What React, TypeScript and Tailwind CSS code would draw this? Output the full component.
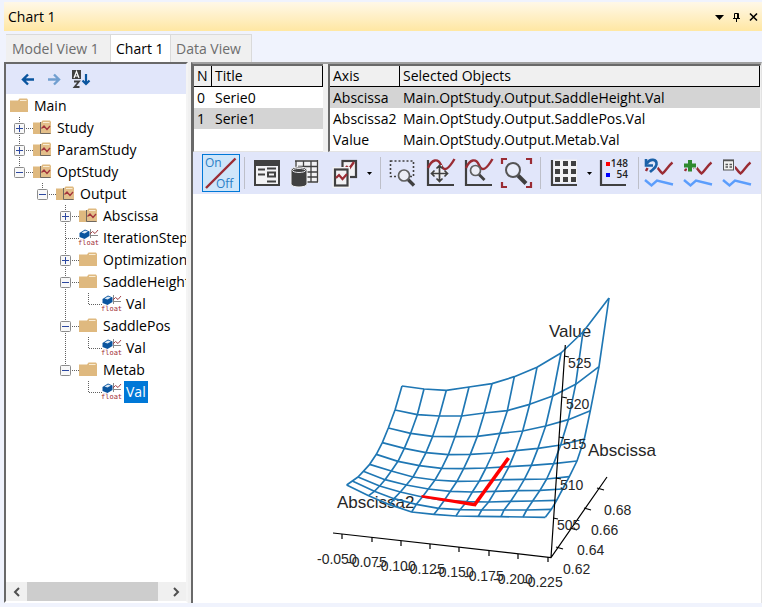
import React from "react";

type Pt = [number, number];

/* ---------- tree ---------- */

type IconKind = "folder" | "study" | "float";
type Guide = "none" | "line";
type Node = {
  label: string;
  depth: number;
  icon: IconKind;
  toggle?: "plus" | "minus";
  last?: boolean;
  guides?: Guide[];
  selected?: boolean;
};

const nodes: Node[] = [
  { label: "Main", depth: 0, icon: "folder" },
  { label: "Study", depth: 1, icon: "study", toggle: "plus" },
  { label: "ParamStudy", depth: 1, icon: "study", toggle: "plus" },
  { label: "OptStudy", depth: 1, icon: "study", toggle: "minus", last: true },
  { label: "Output", depth: 2, icon: "study", toggle: "minus", last: true, guides: ["none"] },
  { label: "Abscissa", depth: 3, icon: "study", toggle: "plus", guides: ["none", "none"] },
  { label: "IterationStep", depth: 3, icon: "float", guides: ["none", "none"] },
  { label: "Optimization", depth: 3, icon: "folder", toggle: "plus", guides: ["none", "none"] },
  { label: "SaddleHeight", depth: 3, icon: "folder", toggle: "minus", guides: ["none", "none"] },
  { label: "Val", depth: 4, icon: "float", last: true, guides: ["none", "none", "line"] },
  { label: "SaddlePos", depth: 3, icon: "folder", toggle: "minus", guides: ["none", "none"] },
  { label: "Val", depth: 4, icon: "float", last: true, guides: ["none", "none", "line"] },
  { label: "Metab", depth: 3, icon: "folder", toggle: "minus", last: true, guides: ["none", "none"] },
  { label: "Val", depth: 4, icon: "float", last: true, guides: ["none", "none", "none"], selected: true },
];

function GuideCell({ kind }: { kind: Guide }) {
  return (
    <svg className="h-[22px] w-[23px] shrink-0" viewBox="0 0 23 22" aria-hidden="true">
      {kind === "line" && <path d="M9.5 0V22" stroke="#606060" strokeDasharray="1 1" />}
    </svg>
  );
}

function JoinCell({ node }: { node: Node }) {
  const art = (
    <svg className="h-[22px] w-[23px]" viewBox="0 0 23 22" fill="none" aria-hidden="true">
      <path d={node.last ? "M9.5 0V12" : "M9.5 0V22"} stroke="#606060" strokeDasharray="1 1" />
      <path d="M10 11.5H23" stroke="#606060" strokeDasharray="1 1" />
      {node.toggle && (
        <>
          <rect x="4.5" y="6.5" width="10" height="10" rx="1" fill="#f8f8f8" stroke="#8c8c8c" />
          <path d="M6 11.5H13" stroke="#2c48a0" />
          {node.toggle === "plus" && <path d="M9.5 8V15" stroke="#2c48a0" />}
        </>
      )}
    </svg>
  );
  return node.toggle ? (
    <button type="button" className="shrink-0" aria-label={`Toggle ${node.label}`}>
      {art}
    </button>
  ) : (
    <span className="shrink-0">{art}</span>
  );
}

function NodeIcon({ kind }: { kind: IconKind }) {
  if (kind === "float") {
    return (
      <svg className="h-[22px] w-[18px] shrink-0 overflow-visible" viewBox="0 0 18 22" fill="none" aria-hidden="true">
        <path d="M0.5 6L6 2.500L10.500 4.5V9L5.5 12L0.5 10Z" fill="#0a559f" />
        <path d="M2.500 5.500L6 3.500L9 4.5L5.5 6.500Z" fill="#dce9f5" />
        <path d="M11.500 2V11M11 8.5H19" stroke="#8a8a8a" />
        <path d="M11 7L13.5 4.5L16 6.5L19 3" stroke="#a3454b" />
        <text x="-1" y="18" fontSize="7" fill="#a02c34" fontFamily="'DejaVu Sans Mono', monospace">
          float
        </text>
      </svg>
    );
  }
  return (
    <svg className="h-[22px] w-[18px] shrink-0" viewBox="0 0 18 22" fill="none" aria-hidden="true">
      <path d="M0 5.5H8L9.5 3.5H17L18 5V17H0Z" fill="#dfb97f" />
      <path d="M10 5.5H16.5" stroke="#f9ecd4" />
      {kind === "study" && (
        <>
          <path d="M8 6H18V16H8Z" fill="#e3bf8a" />
          <path d="M7.5 5V16.5H17.5" stroke="#70685f" />
          <path d="M8.500 11.5L11 9L14 12.500L17 9" stroke="#a3343c" strokeWidth="1.3" />
        </>
      )}
    </svg>
  );
}

function TreeRow({ node }: { node: Node }) {
  return (
    <li className="flex h-[22px] items-center">
      {(node.guides ?? []).map((g, i) => (
        <GuideCell key={i} kind={g} />
      ))}
      {node.depth > 0 && <JoinCell node={node} />}
      <NodeIcon kind={node.icon} />
      <span
        className={
          node.selected
            ? "ml-1 bg-[#0078d7] px-0.5 leading-[22px] whitespace-nowrap text-white"
            : "ml-1 px-0.5 leading-[22px] whitespace-nowrap"
        }
      >
        {node.label}
      </span>
    </li>
  );
}

function TreePanel() {
  return (
    <section className="flex w-[184px] shrink-0 flex-col border-2 border-t-[#696969] border-r-[#f4f4f4] border-b-white border-l-[#696969] bg-white">
      <div className="flex h-[30px] shrink-0 items-center gap-2 bg-[#e1e6fa] pl-[14px]">
        <button type="button" aria-label="Back">
          <svg className="h-4 w-[18px]" viewBox="0 0 18 16" fill="none" stroke="#0a559f" strokeWidth="2.4" aria-hidden="true">
            <path d="M3 8.500H14M8 3.500L3 8.500L8 13.500" />
          </svg>
        </button>
        <button type="button" aria-label="Forward">
          <svg className="h-4 w-[18px]" viewBox="0 0 18 16" fill="none" stroke="#719fd0" strokeWidth="2.4" aria-hidden="true">
            <path d="M2 8.500H13M8 3.500L13 8.500L8 13.500" />
          </svg>
        </button>
        <button type="button" aria-label="Sort by name">
          <svg className="h-5 w-5" viewBox="0 0 20 20" fill="none" aria-hidden="true">
            <rect x="0" y="1" width="9" height="9" fill="#404040" />
            <path d="M2 9L4.500 2.500L7 9M3 7H6" stroke="#fff" strokeWidth="1.200" />
            <path d="M2 12.500H7L2.500 18H7.500" stroke="#404040" strokeWidth="1.800" />
            <path d="M14 5V15M10.500 11.500L14 15L17.500 11.500" stroke="#0a559f" strokeWidth="2.200" />
          </svg>
        </button>
      </div>
      <ul className="min-h-0 flex-1 overflow-hidden pt-px pl-1">
        {nodes.map((n, i) => (
          <TreeRow key={i} node={n} />
        ))}
      </ul>
      <div className="flex h-[19px] shrink-0 bg-[#f0f0f0]">
        <button type="button" aria-label="Scroll left" className="flex w-[21px] items-center justify-center">
          <svg className="h-[10px] w-2" viewBox="0 0 8 10" fill="none" stroke="#505050" strokeWidth="2" aria-hidden="true">
            <path d="M6 1L2 5L6 9" />
          </svg>
        </button>
        <div className="mr-[7px] flex-1 bg-[#cdcdcd]" />
        <button type="button" aria-label="Scroll right" className="flex w-[21px] items-center justify-center">
          <svg className="h-[10px] w-2" viewBox="0 0 8 10" fill="none" stroke="#505050" strokeWidth="2" aria-hidden="true">
            <path d="M2 1L6 5L2 9" />
          </svg>
        </button>
      </div>
    </section>
  );
}

/* ---------- lists ---------- */

type ListProps = { head: [string, string]; rows: [string, string][]; active: number; firstCol: string };

function List({ head, rows, active, firstCol }: ListProps) {
  return (
    <table className="w-full table-fixed border-separate border-spacing-0 text-left">
      <thead>
        <tr className="bg-[#f0f0f0]">
          <th className={`${firstCol} border-r border-b border-black px-[3px] font-normal leading-5`}>{head[0]}</th>
          <th className="border-r border-b border-black px-[3px] font-normal leading-5">{head[1]}</th>
        </tr>
      </thead>
      <tbody>
        {rows.map((r, i) => (
          <tr key={r[0]} className={i === active ? "bg-[#d4d4d4]" : ""}>
            <td className="px-[3px] leading-[21px] whitespace-nowrap">{r[0]}</td>
            <td className="px-[3px] leading-[21px] whitespace-nowrap">{r[1]}</td>
          </tr>
        ))}
      </tbody>
    </table>
  );
}

/* ---------- toolbar ---------- */

const INK = "#404040";
const RED = "#9a2c34";

function Tool({ label, on, children }: { label: string; on?: boolean; children: React.ReactNode }) {
  return (
    <button
      type="button"
      aria-label={label}
      className={on ? "h-[38px] w-[38px] shrink-0 bg-[#cfe6fa] outline outline-1 -outline-offset-1 outline-[#0078d7]" : "h-[38px] w-[38px] shrink-0"}
    >
      <svg className="h-[38px] w-[38px]" viewBox="0 0 38 38" fill="none" aria-hidden="true">
        {children}
      </svg>
    </button>
  );
}

function Drop({ label }: { label: string }) {
  return (
    <button type="button" aria-label={label} className="flex h-[38px] w-[14px] shrink-0 items-center justify-center">
      <svg className="h-[3px] w-[5px]" viewBox="0 0 5 3" aria-hidden="true">
        <path d="M0 0H5L2.500 3Z" fill="#000" />
      </svg>
    </button>
  );
}

function Sep() {
  return (
    <div className="flex h-[38px] w-2 shrink-0 justify-center py-[3px]">
      <div className="w-px bg-[#bdbfc9]" />
    </div>
  );
}

function Waves({ x }: { x: number }) {
  return (
    <g transform={`translate(${x} 0)`}>
      <path d="M0 26L6.500 31.500L12 26.500L28 30.500" stroke="#5b9dfc" strokeWidth="2.400" />
      <path d="M1 17L2.500 14M8 14.500L11 12.500C14 14.500 15 18 17.500 19.500C20 18 23 12 27.500 8.500" stroke={RED} strokeWidth="2.400" />
    </g>
  );
}

function Toolbar() {
  return (
    <div className="flex h-[42px] shrink-0 items-center overflow-hidden bg-[#e1e6fa] pl-[9px]">
      <Tool label="Toggle on or off" on>
        <path d="M4 34L33.500 4.500" stroke={RED} strokeWidth="2.400" />
        <text x="3" y="13" fontSize="12" fill="#2a7fc6" fontFamily="'Open Sans', sans-serif">On</text>
        <text x="14" y="34" fontSize="12" fill="#2a7fc6" fontFamily="'Open Sans', sans-serif">Off</text>
      </Tool>
      <Sep />
      <Tool label="Properties">
        <rect x="6" y="6" width="26" height="26" fill={INK} />
        <rect x="8" y="12" width="22" height="18" fill="#f2f2f4" />
        <path d="M10 15.500H17M10 20.500H17M19 14.500H28M19 27.500H28" stroke={INK} strokeWidth="2" />
        <rect x="20" y="18.500" width="7" height="4" stroke={INK} strokeWidth="2" />
      </Tool>
      <Tool label="Data source">
        <rect x="9" y="6" width="24" height="23" fill="#f2f2f4" />
        <path d="M9 7H32M12 12.500H32M12 18H32M20 23H32M20 28H32M10 7V14M17.500 7V28M25 7V28M31.500 6V28" stroke={INK} strokeWidth="1.300" />
        <path d="M5 16C5 12 21 12 21 16V30C21 34 5 34 5 30Z" fill={INK} stroke="#f2f2f4" />
        <ellipse cx="13" cy="16.500" rx="6.500" ry="2" stroke="#e4e4e8" />
      </Tool>
      <Tool label="Copy chart">
        <rect x="18.500" y="7" width="13.500" height="16" fill="#f2f2f4" stroke={INK} strokeWidth="2.200" />
        <path d="M22 12L25 15L30 8" stroke={RED} strokeWidth="2.400" />
        <rect x="8.500" y="13" width="17.500" height="21" fill="#f2f2f4" />
        <rect x="11" y="15.500" width="12.500" height="16" fill="#f2f2f4" stroke={INK} strokeWidth="2.200" />
        <path d="M12 24L15 21L18.500 25L23 20" stroke={RED} strokeWidth="2.200" />
      </Tool>
      <Drop label="Copy options" />
      <Sep />
      <Tool label="Zoom to selection">
        <rect x="6.500" y="7" width="23" height="15.500" stroke={INK} strokeWidth="1.600" strokeDasharray="2 2" />
        <path d="M24 25.500L30 31.500" stroke={INK} strokeWidth="3.400" />
        <circle cx="20" cy="21.500" r="5.500" fill="#eceef6" stroke="#606060" strokeWidth="1.700" />
      </Tool>
      <Tool label="Pan">
        <path d="M6 6V31H32" stroke={INK} strokeWidth="2.200" />
        <path d="M6 14C10 5 16 4 19 11S26 16 32.500 5" stroke={RED} strokeWidth="2.400" />
        <path d="M17.500 11V28M9 19.500H26" stroke="#f2f2f4" strokeWidth="5" />
        <path d="M17.500 12V27M10 19.500H25M14.500 14.500L17.500 11.500L20.500 14.500M14.500 24.500L17.500 27.500L20.500 24.500M12.500 16.500L9.500 19.500L12.500 22.500M22.500 16.500L25.500 19.500L22.500 22.500" stroke={INK} strokeWidth="1.700" />
      </Tool>
      <Tool label="Zoom chart">
        <path d="M6 6V31H32" stroke={INK} strokeWidth="2.200" />
        <path d="M6 14C10 5 16 4 19 11S26 16 32.500 5" stroke={RED} strokeWidth="2.400" />
        <path d="M19 20.500L24.500 26" stroke={INK} strokeWidth="2.800" />
        <circle cx="15.500" cy="16.500" r="5" fill="#eceef6" stroke="#606060" strokeWidth="1.700" />
      </Tool>
      <Tool label="Zoom to fit">
        <path d="M4 10V5H9M28 5H33V10M33 28V33H28M9 33H4V28" stroke={RED} strokeWidth="2.200" />
        <path d="M20 21.500L28 29.500" stroke={INK} strokeWidth="4" />
        <circle cx="15" cy="16" r="7" fill="#e9edfa" stroke="#555" strokeWidth="2" />
      </Tool>
      <Sep />
      <Tool label="Grid layout">
        <path d="M8 6V31H33" stroke={INK} strokeWidth="2.200" />
        <path d="M9.500 5.500H33V29H9.500Z" fill="#f2f2f4" />
        {[11, 19, 27].map((x) => [7, 15, 23].map((y) => <rect key={`${x}-${y}`} x={x} y={y} width="5" height="5" fill={INK} />))}
      </Tool>
      <Drop label="Grid options" />
      <Tool label="Data labels">
        <path d="M5 6V31H30" stroke={INK} strokeWidth="2.200" />
        <rect x="10" y="8" width="4" height="4" fill="#f00" />
        <rect x="10" y="19" width="4" height="4" fill="#00f" />
        <text x="32" y="13" fontSize="10" textAnchor="end" fill="#222" fontWeight="600" fontFamily="'Open Sans', sans-serif">148</text>
        <text x="32" y="24" fontSize="10" textAnchor="end" fill="#222" fontWeight="600" fontFamily="'Open Sans', sans-serif">54</text>
      </Tool>
      <Sep />
      <Tool label="Reset series">
        <Waves x={3} />
        <path d="M5 9.500C8 4 15 6 14 11C13.500 14 11 16 9 18" stroke="#e1e6fa" strokeWidth="5" />
        <path d="M5 9.500C8 4 15 5 14.500 10.500C14 14 11 15 8 18M4 5V11.500H11" stroke="#1b61a8" strokeWidth="2.600" />
      </Tool>
      <Tool label="Add series">
        <Waves x={4} />
        <path d="M10 5V18M3 11.500H17" stroke="#e1e6fa" strokeWidth="6" />
        <path d="M10 6V17.500M4 11.500H16" stroke="#2f8a2f" strokeWidth="4" />
      </Tool>
      <Tool label="Series properties">
        <Waves x={5} />
        <rect x="4" y="4" width="13" height="14" fill="#e1e6fa" />
        <rect x="5.500" y="6" width="10" height="10" fill="#f2f2f0" stroke="#555" />
        <path d="M5 6.500H16M7.500 10.500H10M7.500 13H10M11.500 10.500H14M11.500 13H14" stroke="#555" strokeWidth="1.400" />
      </Tool>
      <Drop label="Series options" />
    </div>
  );
}

/* ---------- chart ---------- */

// Surface samples, one array per constant-Abscissa line, at three units per pixel.
const surface: Pt[][] = [
  [[186, 48], [252, 57], [319, 61], [387, 51], [456, 41], [523, 20], [591, -8], [663, -51], [729, -114], [807, -216]],
  [[165, 120], [232, 134], [298, 138], [365, 138], [433, 129], [502, 122], [569, 103], [638, 78], [707, 43], [777, -10]],
  [[145, 174], [212, 190], [278, 199], [345, 200], [412, 199], [480, 190], [548, 183], [617, 168], [685, 149], [751, 122]],
  [[127, 218], [193, 235], [258, 248], [325, 254], [391, 253], [459, 249], [527, 242], [594, 235], [662, 225], [733, 207]],
  [[109, 253], [174, 274], [238, 287], [305, 295], [371, 296], [438, 294], [507, 290], [574, 286], [641, 281], [711, 273]],
  [[89, 283], [154, 303], [219, 321], [285, 330], [351, 334], [418, 333], [486, 329], [553, 328], [620, 327], [688, 320]],
  [[70, 304], [135, 329], [199, 345], [265, 357], [331, 364], [397, 366], [465, 364], [533, 362], [600, 361], [668, 357]],
  [[54, 321], [119, 348], [181, 366], [247, 381], [313, 391], [380, 395], [446, 396], [512, 394], [578, 393], [650, 391]],
  [[37, 333], [103, 364], [162, 386], [229, 403], [296, 415], [360, 419], [425, 420], [492, 420], [560, 420], [634, 418]],
  [[20, 345], [86, 377], [149, 404], [215, 426], [282, 433], [348, 438], [415, 439], [483, 440], [549, 441], [616, 442]],
];

const columns: Pt[][] = surface[0].map((_, c) => surface.map((row) => row[c]));
const toPoints = (line: Pt[]) => line.map(([x, y]) => `${x},${y}`).join(" ");

const xTicks: [string, number, number][] = [
  ["-0.050", 342, 534], ["-0.075", 372, 537], ["-0.100", 401, 541], ["-0.125", 430, 544],
  ["-0.150", 459, 547], ["-0.175", 489, 551], ["-0.200", 518, 554], ["-0.225", 548, 557],
];
const zTicks: [string, number, number][] = [
  ["525", 564, 356], ["520", 562, 397], ["515", 559, 437], ["510", 556, 478], ["505", 553, 518],
];
const yTicks: [string, number, number][] = [
  ["0.62", 558, 547], ["0.64", 572, 528], ["0.66", 586, 508], ["0.68", 599, 488],
];

function SurfaceChart() {
  return (
    <svg
      className="h-[409px] w-[568px]"
      viewBox="193 194 568 409"
      fill="none"
      fontFamily="'Liberation Sans', Arial, sans-serif"
      role="img"
      aria-label="Surface of Value over Abscissa and Abscissa2"
    >
      <g fill="#262626" fontSize="17">
        <text x="549" y="337">Value</text>
        <text x="588" y="456">Abscissa</text>
        <text x="337" y="508">Abscissa2</text>
      </g>
      <g transform="translate(340 370) scale(0.33333)" stroke="#1f77b4" strokeWidth="5" strokeLinejoin="round">
        {surface.concat(columns).map((line, i) => (
          <polyline key={i} points={toPoints(line)} />
        ))}
      </g>
      <g stroke="#000" strokeWidth="1.2">
        <path d="M333 533L551 557.500L607 477M551 557.500L565.300 345" />
        {xTicks.map(([t, x, y]) => <path key={t} d={`M${x} ${y}v5`} />)}
        {zTicks.map(([t, x, y]) => <path key={t} d={`M${x} ${y}l5 1`} />)}
        {yTicks.map(([t, x, y]) => <path key={t} d={`M${x - 2} ${y}l7 2`} />)}
      </g>
      <g fill="#262626" fontSize="14">
        {xTicks.map(([t, x, y]) => <text key={t} x={x - 25} y={y + 30}>{t}</text>)}
        {zTicks.map(([t, x, y]) => <text key={t} x={x + 4} y={y + 12}>{t}</text>)}
        {yTicks.map(([t, x, y]) => <text key={t} x={x + 5} y={y + 27}>{t}</text>)}
      </g>
      <path d="M421.500 495L476 503V506.500L472 506L421.500 497.500Z" fill="#f00" />
      <path d="M474.500 505L508.500 458" stroke="#f00" strokeWidth="3.600" />
    </svg>
  );
}

/* ---------- window ---------- */

export default function App() {
  return (
    <div className="flex h-screen flex-col overflow-hidden bg-[#f0f3fd] pt-0.5 pb-1 pl-1 font-['Open_Sans','Noto_Sans',sans-serif] text-[14px] text-black">
      <header className="flex h-[29px] shrink-0 items-center bg-gradient-to-b from-[#fff8e8] to-[#ffe7a2] pr-1 pl-1">
        <h1 className="flex-1">Chart 1</h1>
        <div className="flex items-center gap-2">
          <button type="button" aria-label="Window menu">
            <svg className="h-3 w-[9px]" viewBox="0 0 9 12" aria-hidden="true"><path d="M0 4H9L4.500 9Z" fill="#000" /></svg>
          </button>
          <button type="button" aria-label="Pin">
            <svg className="h-3 w-[9px]" viewBox="0 0 9 12" fill="none" stroke="#000" aria-hidden="true">
              <path d="M2.500 7V2.500H6.500V7M1 7.500H8M4.500 8V11M5.500 3V7" />
            </svg>
          </button>
          <button type="button" aria-label="Close">
            <svg className="h-3 w-[9px]" viewBox="0 0 9 12" fill="none" stroke="#000" strokeWidth="1.600" aria-hidden="true">
              <path d="M1 2.500L8 9.500M8 2.500L1 9.500" />
            </svg>
          </button>
        </div>
      </header>

      <nav className="mt-[3px] flex h-7 shrink-0 pl-0.5 text-left text-[#6d6d6d]">
        <button type="button" className="w-[105px] border-t border-r border-[#dadada] bg-[#f0f0f0] pl-[6px] text-left whitespace-nowrap">Model View 1</button>
        <button type="button" className="w-[60px] border-t border-r border-[#dadada] bg-white pl-[5px] text-left whitespace-nowrap text-black">Chart 1</button>
        <button type="button" className="w-[81px] border-t border-r border-[#dadada] bg-[#f0f0f0] pl-[5px] text-left whitespace-nowrap">Data View</button>
      </nav>

      <main className="flex min-h-0 flex-1 bg-[#f0f0f0]">
        <TreePanel />
        <section className="ml-[3px] flex min-w-0 flex-1 flex-col border-t-2 border-r border-l-2 border-t-[#a0a0a0] border-r-[#e3e3e3] border-l-[#696969] bg-white">
          <div className="flex h-[88px] shrink-0 gap-[5px] bg-[#f0f0f0]">
            <div className="w-[130px] shrink-0 overflow-hidden border-t-2 border-b border-l border-t-[#696969] border-b-[#e3e3e3] border-l-[#696969] bg-white">
              <List head={["N", "Title"]} rows={[["0", "Serie0"], ["1", "Serie1"]]} active={1} firstCol="w-[18px]" />
            </div>
            <div className="min-w-0 flex-1 overflow-hidden border-t-2 border-r border-b border-l-2 border-t-[#696969] border-r-[#f0f0f0] border-b-[#e3e3e3] border-l-[#696969] bg-white">
              <List
                head={["Axis", "Selected Objects"]}
                rows={[
                  ["Abscissa", "Main.OptStudy.Output.SaddleHeight.Val"],
                  ["Abscissa2", "Main.OptStudy.Output.SaddlePos.Val"],
                  ["Value", "Main.OptStudy.Output.Metab.Val"],
                ]}
                active={0}
                firstCol="w-[70px]"
              />
            </div>
          </div>
          <Toolbar />
          <div className="min-h-0 flex-1 overflow-hidden bg-white">
            <SurfaceChart />
          </div>
        </section>
      </main>
    </div>
  );
}
